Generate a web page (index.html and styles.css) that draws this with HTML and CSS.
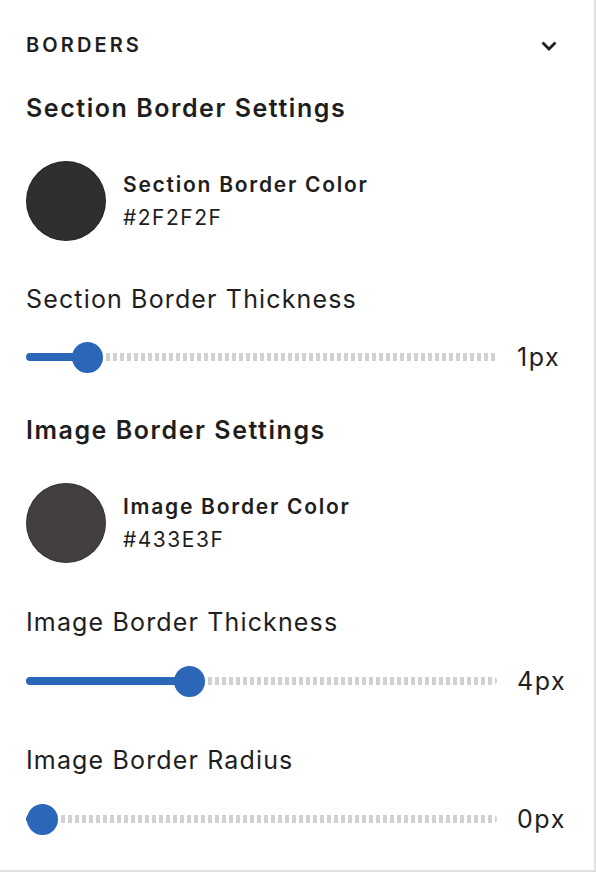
FILE: index.html
```html
<!DOCTYPE html>
<html>
<head>
<meta charset="utf-8">
<link rel="stylesheet" href="styles.css">
</head>
<body>
<div class="panel">
  <div class="panel-header">
    <span class="panel-title">BORDERS</span>
    <svg class="chevron" width="18" height="12" viewBox="0 0 18 12"><path d="M2.5 2.5 L9 9 L15.5 2.5" fill="none" stroke="#1e1e1e" stroke-width="2.8"/></svg>
  </div>

  <h3 class="group-title first">Section Border Settings</h3>
  <div class="color-row">
    <div class="swatch" style="background:#2F2F2F"></div>
    <div class="color-text">
      <div class="color-name">Section Border Color</div>
      <div class="color-hex">#2F2F2F</div>
    </div>
  </div>
  <div class="label l1">Section Border Thickness</div>
  <div class="range r1">
    <div class="track">
      <div class="fill" style="width:61px"></div>
      <div class="thumb"></div>
      <div class="rest"></div>
    </div>
    <div class="value">1px</div>
  </div>

  <h3 class="group-title second">Image Border Settings</h3>
  <div class="color-row">
    <div class="swatch" style="background:#433E3F"></div>
    <div class="color-text">
      <div class="color-name">Image Border Color</div>
      <div class="color-hex">#433E3F</div>
    </div>
  </div>
  <div class="label l2">Image Border Thickness</div>
  <div class="range r2">
    <div class="track">
      <div class="fill" style="width:163px"></div>
      <div class="thumb"></div>
      <div class="rest"></div>
    </div>
    <div class="value">4px</div>
  </div>

  <div class="label l3">Image Border Radius</div>
  <div class="range r3">
    <div class="track">
      <div class="fill" style="width:16px"></div>
      <div class="thumb"></div>
      <div class="rest"></div>
    </div>
    <div class="value">0px</div>
  </div>
</div>
</body>
</html>
```

FILE: styles.css
```css
* { box-sizing: border-box; }
html, body { margin: 0; padding: 0; background: #fff; }
body {
  font-family: Inter, "Noto Sans", sans-serif;
  color: #1e1e1e;
}
.panel {
  width: 596px;
  height: 872px;
  border-right: 2px solid #e0e0e0;
  border-bottom: 2px solid #e0e0e0;
  padding: 33px 32px 0 26px;
  display: flex;
  flex-direction: column;
}
.panel-header {
  display: flex;
  align-items: center;
  justify-content: space-between;
  height: 24px;
}
.panel-title {
  font-size: 20px;
  line-height: 24px;
  font-weight: 600;
  letter-spacing: 3.1px;
}
.chevron { display: block; margin-right: 4px; margin-top: 1px; }
.group-title {
  margin: 0;
  font-size: 25px;
  line-height: 32px;
  font-weight: 600;
  letter-spacing: 1.55px;
}
.group-title.first { margin-top: 35px; }
.group-title.second { margin-top: 42px; }
.color-row {
  margin-top: 37px;
  display: flex;
  align-items: center;
  gap: 17px;
}
.swatch {
  width: 80px;
  height: 80px;
  border-radius: 50%;
  box-shadow: inset 0 0 0 1px rgba(0,0,0,0.2);
  flex: none;
}
.color-text {
  display: flex;
  flex-direction: column;
  font-size: 21px;
  line-height: 33px;
  letter-spacing: 1.75px;
  padding-top: 0;
}
.color-name { font-weight: 600; }
.color-hex { font-weight: 400; letter-spacing: 1.5px; }
.label {
  font-size: 25px;
  line-height: 32px;
  font-weight: 400;
  letter-spacing: 1.15px;
}
.l1 { margin-top: 42px; }
.l2 { margin-top: 43px; }
.l3 { margin-top: 48px; }
.range {
  display: flex;
  align-items: center;
  height: 30px;
  gap: 20px;
}
.r1 { margin-top: 27px; }
.r2 { margin-top: 28px; }
.r3 { margin-top: 28px; }
.track {
  flex: 1;
  display: flex;
  align-items: center;
  height: 30px;
}
.fill {
  height: 8px;
  background: #2b66b9;
  border-radius: 4px 0 0 4px;
  flex: none;
}
.thumb {
  width: 31px;
  height: 31px;
  border-radius: 50%;
  background: #2b66b9;
  flex: none;
  margin: 0 -15px;
  position: relative;
  z-index: 1;
}
.rest {
  flex: 1;
  height: 8px;
  border-radius: 0 4px 4px 0;
  background: repeating-linear-gradient(to right, transparent 0, transparent 3px, #cfd1d5 3px, #cfd1d5 7px);
  margin-left: 15px;
}
.value {
  font-size: 25px;
  line-height: 30px;
  width: 45px;
  flex: none;
  letter-spacing: 1.6px;
  white-space: nowrap;
}
```
